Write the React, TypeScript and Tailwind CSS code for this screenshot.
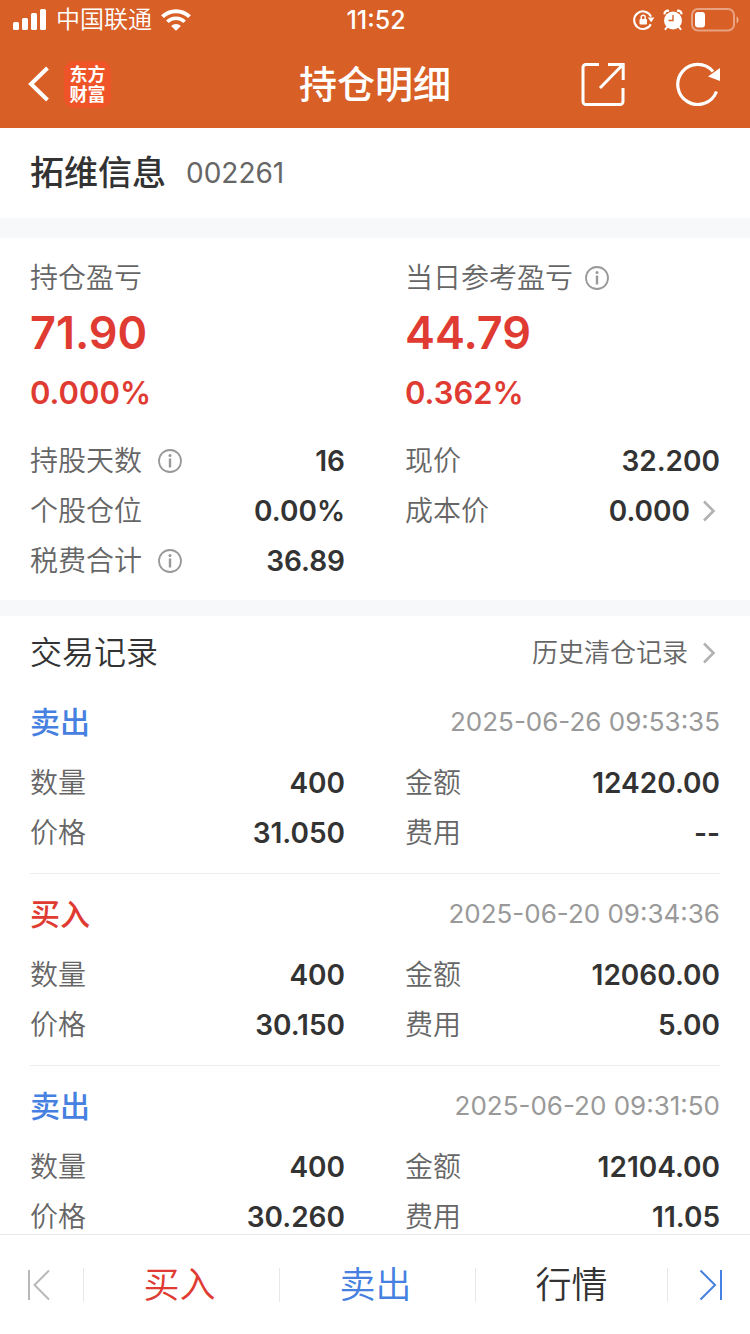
import type { ReactNode } from "react";

type Side = "买入" | "卖出";

interface Trade {
  side: Side;
  time: string;
  quantity: string;
  amount: string;
  price: string;
  fee: string;
}

const trades: Trade[] = [
  { side: "卖出", time: "2025-06-26 09:53:35", quantity: "400", amount: "12420.00", price: "31.050", fee: "--" },
  { side: "买入", time: "2025-06-20 09:34:36", quantity: "400", amount: "12060.00", price: "30.150", fee: "5.00" },
  { side: "卖出", time: "2025-06-20 09:31:50", quantity: "400", amount: "12104.00", price: "30.260", fee: "11.05" },
];

function SignalIcon() {
  return (
    <svg width="34" height="22" viewBox="0 0 34 22" fill="currentColor" aria-hidden="true">
      <rect x="0" y="13" width="6" height="8" rx="1.5" />
      <rect x="9" y="9" width="6" height="12" rx="1.5" />
      <rect x="18" y="4" width="6" height="17" rx="1.5" />
      <rect x="27" y="0" width="6" height="21" rx="1.5" />
    </svg>
  );
}

function WifiIcon() {
  return (
    <svg width="30" height="22" viewBox="0 0 30 22" fill="none" stroke="currentColor" aria-hidden="true">
      <path d="M1.5 7.6a19.4 19.4 0 0 1 27 0" strokeWidth="4" />
      <path d="M6.4 12.8a12.3 12.3 0 0 1 17.2 0" strokeWidth="3.6" />
      <path d="M15 21.8l-4.9-4.7a7 7 0 0 1 9.8 0z" fill="currentColor" stroke="none" />
    </svg>
  );
}

function RotationLockIcon() {
  return (
    <svg width="22" height="22" viewBox="0 0 22 22" aria-hidden="true">
      <path d="M17.8 15.2a8.8 8.8 0 1 1 .2-7.600" fill="none" stroke="currentColor" strokeWidth="2" />
      <path d="M14.8 8.600h6.600l-3.200 4.600z" fill="currentColor" />
      <rect x="6.500" y="10" width="7.500" height="5.500" rx="1" fill="currentColor" />
      <path d="M8.200 10.500V8.200a2 2 0 0 1 4 0v2.300" fill="none" stroke="currentColor" strokeWidth="1.400" />
    </svg>
  );
}

function AlarmIcon() {
  return (
    <svg width="20" height="22" viewBox="0 0 20 22" aria-hidden="true">
      <circle cx="10" cy="11.500" r="9" fill="currentColor" />
      <path d="M1.600 4.400a3 3 0 0 1 3.400-2.600M18.400 4.400a3 3 0 0 0-3.400-2.600" fill="none" stroke="currentColor" strokeWidth="2.400" strokeLinecap="round" />
      <path d="M4 18.200l-1.600 1.900M16 18.200l1.600 1.900" stroke="currentColor" strokeWidth="2" strokeLinecap="round" />
      <path d="M10 6v5.500H5.500" fill="none" stroke="#d86027" strokeWidth="1.400" />
    </svg>
  );
}

function BatteryIcon() {
  return (
    <svg width="48" height="24" viewBox="0 0 48 24" aria-hidden="true">
      <rect x="1" y="1" width="42" height="21.500" rx="6" fill="none" stroke="#fff" strokeOpacity=".42" strokeWidth="2" />
      <path d="M45.600 8.200c2.600 1.600 2.600 5.600 0 7.200z" fill="#fff" fillOpacity=".5" />
      <rect x="4" y="4" width="10" height="15.500" rx="3" fill="#fff" />
    </svg>
  );
}

function InfoButton({ label }: { label: string }) {
  return (
    <button type="button" aria-label={label} className="text-[#999999]">
      <svg width="24" height="24" viewBox="0 0 24 24" fill="none" stroke="currentColor" aria-hidden="true">
        <circle cx="12" cy="12" r="11" strokeWidth="1.800" />
        <circle cx="12" cy="6.600" r="1.500" fill="currentColor" stroke="none" />
        <path d="M12 9.500v9" strokeWidth="2.400" />
      </svg>
    </button>
  );
}

function Chevron() {
  return (
    <svg width="14" height="22" viewBox="0 0 14 22" fill="none" stroke="#b2b2b2" strokeWidth="2.600" aria-hidden="true">
      <path d="M2 1.500l9.500 9.500L2 20.500" />
    </svg>
  );
}

function Row({ label, info, children }: { label: string; info?: boolean; children: ReactNode }) {
  return (
    <div className="flex h-[50px] items-center justify-between">
      <dt className="flex items-center gap-4 text-[28px] font-[350] text-[#666666]">
        {label}
        {info && <InfoButton label={`${label}说明`} />}
      </dt>
      <dd className="text-[28px] font-semibold text-[#333333]">{children}</dd>
    </div>
  );
}

function Total({ label, value, percent, info }: { label: string; value: string; percent: string; info?: boolean }) {
  return (
    <div>
      <h2 className="flex h-12 items-center gap-3 text-[28px] font-[350] text-[#666666]">
        {label}
        {info && <InfoButton label={`${label}说明`} />}
      </h2>
      <p className="h-[62px] text-[45px] leading-[62px] font-semibold text-[#df3b32]">{value}</p>
      <p className="h-14 text-[31px] leading-[58px] font-semibold text-[#df3b32]">{percent}</p>
    </div>
  );
}

function TradeRecord({ trade }: { trade: Trade }) {
  return (
    <li className="border-b border-[#ececec] pt-1 pb-[15px]">
      <div className="flex h-[72px] items-center justify-between">
        <h3 className={trade.side === "买入" ? "text-[30px] font-medium text-[#df3b32]" : "text-[30px] font-medium text-[#4680e0]"}>
          {trade.side}
        </h3>
        <time className="text-[26px] text-[#999999]">{trade.time}</time>
      </div>
      <dl className="grid grid-cols-2 gap-x-[60px]">
        <Row label="数量">{trade.quantity}</Row>
        <Row label="金额">{trade.amount}</Row>
        <Row label="价格">{trade.price}</Row>
        <Row label="费用">{trade.fee}</Row>
      </dl>
    </li>
  );
}

export default function App() {
  return (
    <div className="flex h-screen flex-col bg-white font-['Inter','Noto_Sans_CJK_SC',sans-serif] leading-none text-[#333333]">
      <header className="shrink-0 bg-[#d86027] text-white">
        <div className="flex h-10 items-center pr-[11px] pl-[13px]">
          <div className="flex flex-1 items-center gap-[9px] text-[24px] font-[350]">
            <SignalIcon />
            <span>中国联通</span>
            <WifiIcon />
          </div>
          <time className="text-[25px] font-medium">11:52</time>
          <div className="flex flex-1 items-center justify-end gap-2">
            <RotationLockIcon />
            <AlarmIcon />
            <BatteryIcon />
          </div>
        </div>
        <div className="flex h-[88px] items-center px-7">
          <div className="flex flex-1 items-center gap-[14px]">
            <button type="button" aria-label="返回">
              <svg width="22" height="36" viewBox="0 0 22 36" fill="none" stroke="currentColor" strokeWidth="4" aria-hidden="true">
                <path d="M19.500 2L3 18l16.500 16" />
              </svg>
            </button>
            <a href="#home" className="flex size-[47px] flex-col items-center justify-center gap-[2px] rounded-[10px] bg-[#ee5428] pt-px text-[18px] font-bold">
              <span>东方</span>
              <span>财富</span>
            </a>
          </div>
          <h1 className="text-[38px] font-medium">持仓明细</h1>
          <div className="flex flex-1 items-center justify-end gap-[51px]">
            <button type="button" aria-label="分享">
              <svg width="44" height="44" viewBox="0 0 44 44" fill="none" stroke="currentColor" strokeWidth="3" aria-hidden="true">
                <path d="M18 2.500H5a3 3 0 0 0-3 3V39.500a3 3 0 0 0 3 3H39a3 3 0 0 0 3-3V26" />
                <path d="M27 2.500H42.200V18M42 2.500L19 26" />
              </svg>
            </button>
            <button type="button" aria-label="刷新">
              <svg width="46" height="44" viewBox="0 0 46 44" fill="none" stroke="currentColor" strokeWidth="3.200" aria-hidden="true">
                <path d="M40.500 29.500A20 20 0 1 1 37 9.500" />
                <path d="M44 6v13L32 14.500z" fill="currentColor" stroke="none" />
              </svg>
            </button>
          </div>
        </div>
      </header>

      <main className="min-h-0 flex-1 overflow-y-auto [scrollbar-width:none]">
        <section className="flex h-[90px] items-center gap-5 px-[30px]">
          <h2 className="text-[34px] font-medium">拓维信息</h2>
          <span className="text-[28px] text-[#666666]">002261</span>
        </section>

        <section className="border-t-[20px] border-[#f7f8fa] px-[30px] pt-4 pb-[14px]">
          <div className="grid grid-cols-2 gap-x-[60px]">
            <Total label="持仓盈亏" value="71.90" percent="0.000%" />
            <Total label="当日参考盈亏" value="44.79" percent="0.362%" info />
          </div>
          <dl className="grid grid-cols-2 gap-x-[60px] pt-4">
            <Row label="持股天数" info>16</Row>
            <Row label="现价">32.200</Row>
            <Row label="个股仓位">0.00%</Row>
            <Row label="成本价">
              <button type="button" className="flex items-center gap-3 pr-1">
                0.000
                <Chevron />
              </button>
            </Row>
            <Row label="税费合计" info>36.89</Row>
          </dl>
        </section>

        <section className="border-t-[16px] border-[#f7f8fa] px-[30px]">
          <div className="flex h-[66px] items-center justify-between pt-2">
            <h2 className="text-[32px] font-[350]">交易记录</h2>
            <a href="#history" className="flex items-center gap-[14px] pr-1 text-[26px] font-[350] text-[#666666]">
              历史清仓记录
              <Chevron />
            </a>
          </div>
          <ul>
            {trades.map((trade) => (
              <TradeRecord key={trade.time} trade={trade} />
            ))}
          </ul>
        </section>
      </main>

      <nav className="flex h-[100px] shrink-0 items-center border-t border-[#e8e8e8] text-[36px] font-[350]">
        <button type="button" aria-label="上一只" className="flex w-[83px] justify-center pr-[6px] text-[#b8b8b8]">
          <svg width="24" height="32" viewBox="0 0 24 32" fill="none" stroke="currentColor" strokeWidth="2" aria-hidden="true">
            <path d="M2 1v30M22 1.500L7.500 16l14.500 14.500" />
          </svg>
        </button>
        <div className="flex flex-1 divide-x divide-[#e8e8e8] border-x border-[#e8e8e8]">
          <button type="button" className="h-[34px] flex-1 pr-1 leading-[34px] text-[#df3b32]">买入</button>
          <button type="button" className="h-[34px] flex-1 pr-1 leading-[34px] text-[#4680e0]">卖出</button>
          <button type="button" className="h-[34px] flex-1 leading-[34px]">行情</button>
        </div>
        <button type="button" aria-label="下一只" className="flex w-[82px] justify-center pl-[3px] text-[#4680e0]">
          <svg width="24" height="32" viewBox="0 0 24 32" fill="none" stroke="currentColor" strokeWidth="2" aria-hidden="true">
            <path d="M1.500 1.500L16 16 1.500 30.500M22 1v30" />
          </svg>
        </button>
      </nav>
    </div>
  );
}
